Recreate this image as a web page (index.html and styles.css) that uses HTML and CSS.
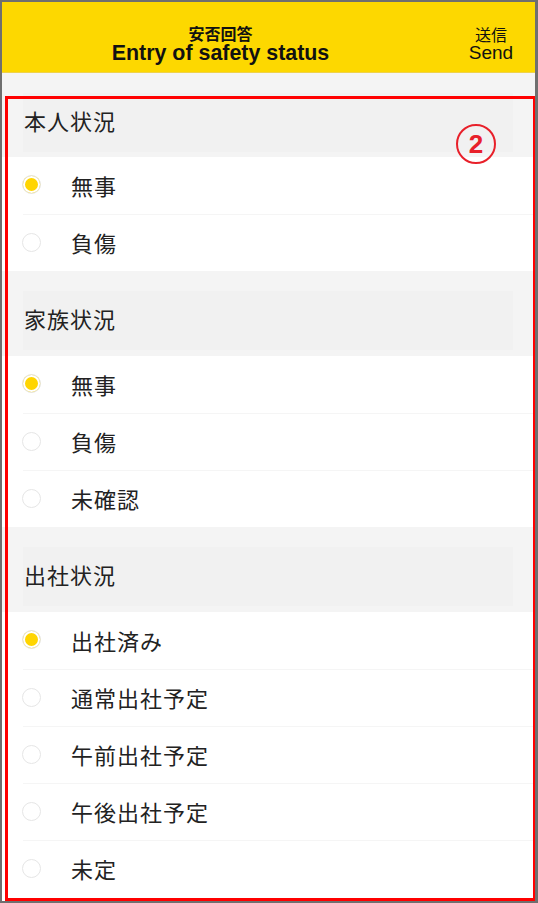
FILE: index.html
```html
<!DOCTYPE html>
<html lang="ja">
<head>
  <meta charset="utf-8"/>
  <title>安否回答</title>
  <link rel="stylesheet" href="styles.css">
</head>
<body>
<div class="screen">
  <div class="topbar">
    <div class="title">
      <span class="title-ja">安否回答</span>
      <span class="title-en">Entry of safety status</span>
    </div>
    <div class="send">
      <span class="send-ja">送信</span>
      <span class="send-en">Send</span>
    </div>
  </div>

  <div class="group first">
    <div class="group-head"><div class="group-label">本人状況</div></div>
    <div class="opt"><span class="radio on"></span><span class="opt-text">無事</span></div>
    <div class="opt"><span class="radio"></span><span class="opt-text">負傷</span></div>
  </div>

  <div class="group">
    <div class="group-head"><div class="group-label">家族状況</div></div>
    <div class="opt"><span class="radio on"></span><span class="opt-text">無事</span></div>
    <div class="opt"><span class="radio"></span><span class="opt-text">負傷</span></div>
    <div class="opt"><span class="radio"></span><span class="opt-text">未確認</span></div>
  </div>

  <div class="group">
    <div class="group-head"><div class="group-label">出社状況</div></div>
    <div class="opt"><span class="radio on"></span><span class="opt-text">出社済み</span></div>
    <div class="opt"><span class="radio"></span><span class="opt-text">通常出社予定</span></div>
    <div class="opt"><span class="radio"></span><span class="opt-text">午前出社予定</span></div>
    <div class="opt"><span class="radio"></span><span class="opt-text">午後出社予定</span></div>
    <div class="opt"><span class="radio"></span><span class="opt-text">未定</span></div>
  </div>

  <div class="mark-box"></div>
  <div class="mark-num">2</div>
</div>
</body>
</html>
```

FILE: styles.css
```css
html, body { margin: 0; padding: 0; background: #fff; }

body {
    font-family: "Noto Sans CJK JP", "Noto Sans", sans-serif;
    color: #222;
}

.screen {
    position: relative;
    width: 538px;
    height: 903px;
    box-sizing: border-box;
    border-top: 2px solid #6f6f6f;
    border-left: 2px solid #6f6f6f;
    border-right: 3px solid #6f6f6f;
    border-bottom: 2px solid #6f6f6f;
    overflow: hidden;
}

/* header bar */
.topbar {
    height: 71px;
    background: #fdd800;
    border-bottom: 1px solid #efd24a;
    box-sizing: border-box;
    display: flex;
    align-items: flex-start;
    padding-top: 22px;
}
.title {
    flex: 1;
    display: flex;
    flex-direction: column;
    align-items: center;
    padding-right: 8px;
}
.title-ja {
    font-size: 16px;
    font-weight: bold;
    line-height: 18px;
    color: #111;
}
.title-en {
    font-family: "Liberation Sans", Arial, sans-serif;
    font-size: 21.4px;
    font-weight: bold;
    line-height: 22px;
    color: #111;
}
.send {
    width: 88px;
    display: flex;
    flex-direction: column;
    align-items: center;
    padding-top: 1px;
}
.send-ja {
    font-size: 16px;
    line-height: 18px;
    color: #111;
}
.send-en {
    font-family: "Liberation Sans", Arial, sans-serif;
    font-size: 19px;
    line-height: 20px;
    color: #111;
}

/* sections */
.group-head {
    height: 85px;
    background: #f4f4f4;
    padding: 20px 22px 6px 21px;
    box-sizing: border-box;
}
.group.first .group-head { height: 84px; }
.group-label {
    height: 59px;
    box-sizing: border-box;
    background: #f1f1f1;
    display: flex;
    align-items: center;
    padding: 0 0 6px 1px;
    font-size: 22px;
    letter-spacing: 1px;
}

.opt {
    height: 57px;
    display: flex;
    align-items: center;
    margin-left: 21px;
    padding-bottom: 2px;
    border-top: 1px solid #f5f5f5;
    box-sizing: border-box;
}
.group-head + .opt { border-top: none; }

.radio {
    width: 19px;
    height: 19px;
    box-sizing: border-box;
    border: 1px solid #e6e6e6;
    border-radius: 50%;
    background: #fff;
    margin-left: -1px;
    margin-right: 30px;
}
.radio.on {
    background: #ffd500;
    box-shadow: inset 0 0 0 2px #fff;
}
.opt-text {
    font-size: 22px;
    letter-spacing: 1px;
}

/* annotation overlay */
.mark-box {
    position: absolute;
    left: 3px;
    top: 94px;
    width: 531px;
    height: 805px;
    box-sizing: border-box;
    border: 3px solid #ff0000;
}
.mark-num {
    position: absolute;
    left: 454px;
    top: 122px;
    width: 40px;
    height: 40px;
    box-sizing: border-box;
    border: 2px solid #e8202a;
    border-radius: 50%;
    color: #e8202a;
    font-family: "Liberation Sans", Arial, sans-serif;
    font-weight: bold;
    font-size: 26px;
    line-height: 36px;
    text-align: center;
}
```
